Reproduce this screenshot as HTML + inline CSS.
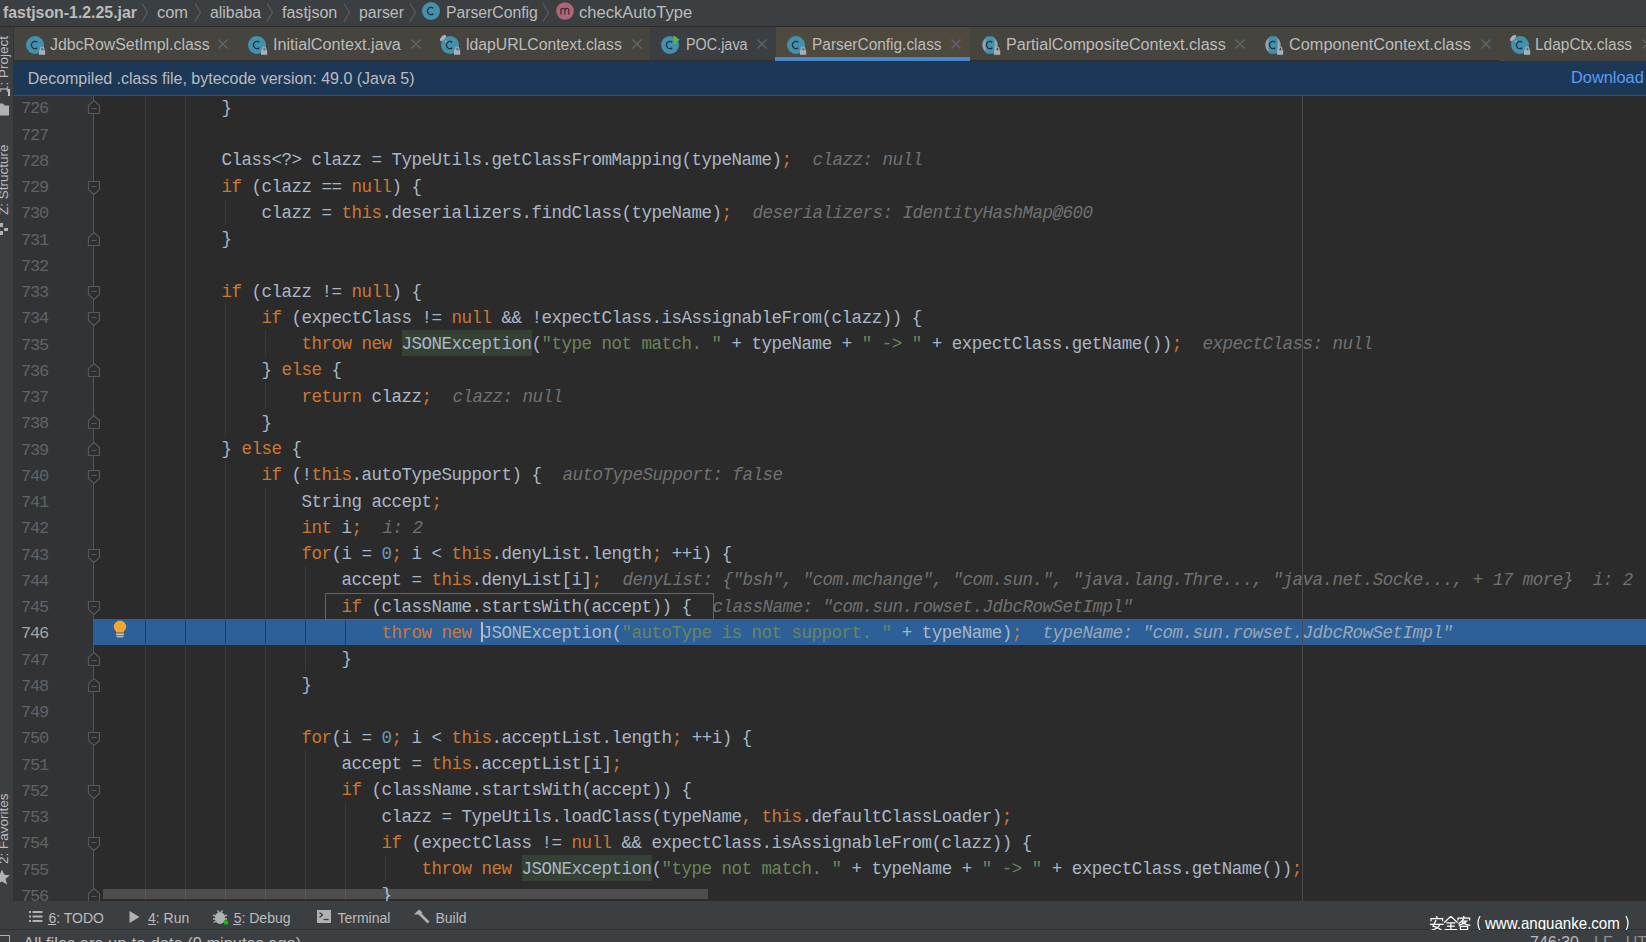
<!DOCTYPE html><html><head><meta charset="utf-8"><style>html,body{margin:0;padding:0}
body{width:1646px;height:942px;overflow:hidden;background:#3c3f41;position:relative;font-family:"Liberation Sans",sans-serif;color:#bbbbbb}
.abs{position:absolute;white-space:pre}
#crumbs{position:absolute;left:0;top:0;width:1646px;height:26px;background:#3c3f41;border-bottom:1px solid #2b2b2b}
.cr{position:absolute;top:3px;font-size:16px;line-height:20px;color:#bbbbbb;white-space:pre}
.chev{position:absolute;top:4px}
#lstrip{position:absolute;left:0;top:27px;width:13px;height:874px;background:#3c3f41;border-right:1px solid #323232}
#tabs{position:absolute;left:14px;top:27px;width:1632px;height:34px;background:#3c3f41}
.tab{position:absolute;top:0;height:34px}
.tabbg.np{background:#45443e}
.tabbg.act{background:#4e4a3f}
.tab .t{position:absolute;top:7px;font-size:16px;line-height:20px;color:#bbbbbb;white-space:pre}
.tab .x{position:absolute;top:12px}
#banner{position:absolute;left:14px;top:61px;width:1632px;height:34px;background:#1d3857;border-bottom:1px solid #4a4e52}
#editor{position:absolute;left:14px;top:96px;width:1632px;height:805px;background:#2b2b2b;overflow:hidden}
#editor>*{position:absolute}
#gutter{left:0;top:0;width:80px;height:805px;background:#313335}
.ln{left:7px;width:40px;font-family:"Liberation Mono",monospace;font-size:17px;letter-spacing:-1.2px;line-height:26.25px;height:26.25px;color:#606366;white-space:pre;text-align:left}
.ln.cur{color:#a4a3a3}
.code,.hint{font-family:"Liberation Mono",monospace;font-size:17.5px;letter-spacing:-0.5px;line-height:26.25px;height:26.25px;color:#a9b7c6;white-space:pre}
.kw{color:#cc7832}.str{color:#6a8759}.num{color:#6897bb}
.hl{background:#344134;display:inline-block;height:26px}
.hint{font-style:italic;color:#717171}
.hint.cur{color:#9aa7b5}
.execline{left:80px;width:1552px;height:26.25px;background:#2d6099}
.guide{width:1px;background:#3b3b3b}
.margin{left:1288px;top:0;width:1px;height:805px;background:#4a4a4a}
.foldline{left:79px;top:0;width:1px;height:805px;background:#555555}
.fold{left:73px}
.caret{left:467px;width:2px;height:20px;background:#bbbbbb}
.redbox{left:311px;top:497px;width:389px;height:27px;border:1px solid #e03030;box-sizing:border-box}
.hscroll{left:89px;top:793px;width:605px;height:10px;background:rgba(255,255,255,0.16)}
#toolbar{position:absolute;left:0;top:901px;width:1646px;height:28px;background:#3c3f41;border-bottom:1px solid #323232}
.tb{position:absolute;top:6px;font-size:14px;line-height:16px;color:#bbbbbb;white-space:pre}
#status{position:absolute;left:0;top:930px;width:1646px;height:12px;background:#3c3f41;overflow:hidden}
.hlbg{width:130px;height:26px;background:#344134}
</style></head><body>
<div id="crumbs"></div>
<div class="abs" style="left:3.00px;top:3.45px;font-size:16px;line-height:20px;font-weight:bold;color:#bbbbbb;transform-origin:0.00px 0;transform:scaleX(0.9911);">fastjson-1.2.25.jar</div>
<svg class="abs" style="left:141px;top:3px" width="9" height="19" viewBox="0 0 9 19"><path d="M1 0.5L6.5 9.5L1 18.5" fill="none" stroke="#5b5d5f" stroke-width="1.2"/></svg>
<div class="abs" style="left:157.30px;top:3.45px;font-size:16px;line-height:20px;color:#bbbbbb;transform-origin:0.00px 0;transform:scaleX(1.0265);">com</div>
<svg class="abs" style="left:194px;top:3px" width="9" height="19" viewBox="0 0 9 19"><path d="M1 0.5L6.5 9.5L1 18.5" fill="none" stroke="#5b5d5f" stroke-width="1.2"/></svg>
<div class="abs" style="left:210.20px;top:3.45px;font-size:16px;line-height:20px;color:#bbbbbb;transform-origin:0.00px 0;transform:scaleX(0.9903);">alibaba</div>
<svg class="abs" style="left:266px;top:3px" width="9" height="19" viewBox="0 0 9 19"><path d="M1 0.5L6.5 9.5L1 18.5" fill="none" stroke="#5b5d5f" stroke-width="1.2"/></svg>
<div class="abs" style="left:282.20px;top:3.45px;font-size:16px;line-height:20px;color:#bbbbbb;transform-origin:0.00px 0;transform:scaleX(1.0018);">fastjson</div>
<svg class="abs" style="left:343px;top:3px" width="9" height="19" viewBox="0 0 9 19"><path d="M1 0.5L6.5 9.5L1 18.5" fill="none" stroke="#5b5d5f" stroke-width="1.2"/></svg>
<div class="abs" style="left:358.70px;top:3.45px;font-size:16px;line-height:20px;color:#bbbbbb;transform-origin:0.00px 0;transform:scaleX(0.9912);">parser</div>
<svg class="abs" style="left:409px;top:3px" width="9" height="19" viewBox="0 0 9 19"><path d="M1 0.5L6.5 9.5L1 18.5" fill="none" stroke="#5b5d5f" stroke-width="1.2"/></svg>
<svg class="abs" style="left:421.00px;top:1.00px" width="22" height="22" viewBox="0 0 22 22"><circle cx="10" cy="10" r="9" fill="#4391ad"/><path d="M12.3 7.3 A3.4 3.7 0 1 0 12.3 12.7" fill="none" stroke="#22313a" stroke-width="1.3"/></svg>
<div class="abs" style="left:445.60px;top:3.45px;font-size:16px;line-height:20px;color:#bbbbbb;transform-origin:0.00px 0;transform:scaleX(0.9839);">ParserConfig</div>
<svg class="abs" style="left:542px;top:3px" width="9" height="19" viewBox="0 0 9 19"><path d="M1 0.5L6.5 9.5L1 18.5" fill="none" stroke="#5b5d5f" stroke-width="1.2"/></svg>
<svg class="abs" style="left:556.00px;top:1.60px" width="18" height="18" viewBox="0 0 18 18"><circle cx="9" cy="9" r="8.8" fill="#b06478"/><path d="M5 12.5V6.5M5 8.2c0.4-1.3 1.3-1.9 2.1-1.9c1 0 1.8 0.6 1.8 2v4.2M8.9 8.2c0.4-1.3 1.3-1.9 2.1-1.9c1 0 1.8 0.6 1.8 2v4.2" fill="none" stroke="#3a2a2f" stroke-width="1.2"/></svg>
<div class="abs" style="left:578.50px;top:3.45px;font-size:16px;line-height:20px;color:#bbbbbb;transform-origin:0.00px 0;transform:scaleX(1.0338);">checkAutoType</div>
<div id="lstrip"></div>
<div id="tabs"></div>
<div class="abs tabbg np" style="left:14px;top:27px;width:636px;height:34px"></div>
<div class="abs" style="left:650px;top:27px;width:1px;height:34px;background:#38383a"></div>
<div class="abs tabbg act" style="left:776px;top:27px;width:194px;height:34px"></div>
<div class="abs tabbg np" style="left:970px;top:27px;width:530px;height:34px"></div>
<div class="abs" style="left:14px;top:60px;width:1632px;height:1px;background:#2e2e2e"></div>
<div class="abs" style="left:775px;top:57px;width:195px;height:4px;background:#4a88c7"></div>
<div class="abs" style="left:1500px;top:27px;width:1px;height:34px;background:#4a4436"></div>
<div class="abs tabbg np" style="left:1501px;top:27px;width:145px;height:34px"></div>
<svg class="abs" style="left:24.85px;top:34.85px" width="22" height="22" viewBox="0 0 22 22"><circle cx="10" cy="10" r="9" fill="#4391ad"/><path d="M12.3 7.3 A3.4 3.7 0 1 0 12.3 12.7" fill="none" stroke="#22313a" stroke-width="1.3"/><rect x="14" y="15.2" width="6.2" height="4.6" fill="#a7b0b8"/><path d="M15.3 15.4v-1.6a1.8 1.8 0 0 1 3.6 0v1.6" stroke="#a7b0b8" stroke-width="1.2" fill="none"/></svg>
<div class="abs" style="left:50.00px;top:35.45px;font-size:16px;line-height:20px;color:#bbbbbb;transform-origin:0.00px 0;transform:scaleX(0.9919);">JdbcRowSetImpl.class</div>
<svg class="abs" style="left:218px;top:39px" width="10" height="10" viewBox="0 0 10 10"><path d="M0.5 0.5L9.5 9.5M9.5 0.5L0.5 9.5" stroke="#626a6e" stroke-width="1.2"/></svg>
<svg class="abs" style="left:247.00px;top:34.85px" width="22" height="22" viewBox="0 0 22 22"><circle cx="10" cy="10" r="9" fill="#4391ad"/><path d="M12.3 7.3 A3.4 3.7 0 1 0 12.3 12.7" fill="none" stroke="#22313a" stroke-width="1.3"/><rect x="14" y="15.2" width="6.2" height="4.6" fill="#a7b0b8"/><path d="M15.3 15.4v-1.6a1.8 1.8 0 0 1 3.6 0v1.6" stroke="#a7b0b8" stroke-width="1.2" fill="none"/></svg>
<div class="abs" style="left:272.60px;top:35.45px;font-size:16px;line-height:20px;color:#bbbbbb;transform-origin:0.00px 0;transform:scaleX(1.0119);">InitialContext.java</div>
<svg class="abs" style="left:411px;top:39px" width="10" height="10" viewBox="0 0 10 10"><path d="M0.5 0.5L9.5 9.5M9.5 0.5L0.5 9.5" stroke="#626a6e" stroke-width="1.2"/></svg>
<svg class="abs" style="left:440.00px;top:34.85px" width="22" height="22" viewBox="0 0 22 22"><circle cx="10" cy="10" r="9" fill="#4391ad"/><path d="M12.3 7.3 A3.4 3.7 0 1 0 12.3 12.7" fill="none" stroke="#22313a" stroke-width="1.3"/><ellipse cx="3" cy="3" rx="3.9" ry="1.9" transform="rotate(-45 3 3)" fill="#a9b1b8"/><path d="M5.3 5.6L6.8 7.1" stroke="#a9b1b8" stroke-width="1.3"/><rect x="14" y="15.2" width="6.2" height="4.6" fill="#a7b0b8"/><path d="M15.3 15.4v-1.6a1.8 1.8 0 0 1 3.6 0v1.6" stroke="#a7b0b8" stroke-width="1.2" fill="none"/></svg>
<div class="abs" style="left:465.70px;top:35.45px;font-size:16px;line-height:20px;color:#bbbbbb;transform-origin:0.00px 0;transform:scaleX(0.9842);">ldapURLContext.class</div>
<svg class="abs" style="left:632px;top:39px" width="10" height="10" viewBox="0 0 10 10"><path d="M0.5 0.5L9.5 9.5M9.5 0.5L0.5 9.5" stroke="#626a6e" stroke-width="1.2"/></svg>
<svg class="abs" style="left:660.00px;top:34.85px" width="22" height="22" viewBox="0 0 22 22"><circle cx="10" cy="10" r="9" fill="#4391ad"/><path d="M12.3 7.3 A3.4 3.7 0 1 0 12.3 12.7" fill="none" stroke="#22313a" stroke-width="1.3"/><path d="M13.6 0.2 L19.6 4.8 L13.6 9.2 Z" fill="#62b543"/></svg>
<div class="abs" style="left:686.00px;top:35.45px;font-size:16px;line-height:20px;color:#bbbbbb;transform-origin:0.00px 0;transform:scaleX(0.8993);">POC.java</div>
<svg class="abs" style="left:757px;top:39px" width="10" height="10" viewBox="0 0 10 10"><path d="M0.5 0.5L9.5 9.5M9.5 0.5L0.5 9.5" stroke="#626a6e" stroke-width="1.2"/></svg>
<svg class="abs" style="left:786.00px;top:34.85px" width="22" height="22" viewBox="0 0 22 22"><circle cx="10" cy="10" r="9" fill="#4391ad"/><path d="M12.3 7.3 A3.4 3.7 0 1 0 12.3 12.7" fill="none" stroke="#22313a" stroke-width="1.3"/><rect x="14" y="15.2" width="6.2" height="4.6" fill="#a7b0b8"/><path d="M15.3 15.4v-1.6a1.8 1.8 0 0 1 3.6 0v1.6" stroke="#a7b0b8" stroke-width="1.2" fill="none"/></svg>
<div class="abs" style="left:812.00px;top:35.45px;font-size:16px;line-height:20px;color:#bbbbbb;transform-origin:0.00px 0;transform:scaleX(0.9650);">ParserConfig.class</div>
<svg class="abs" style="left:951px;top:39px" width="10" height="10" viewBox="0 0 10 10"><path d="M0.5 0.5L9.5 9.5M9.5 0.5L0.5 9.5" stroke="#626a6e" stroke-width="1.2"/></svg>
<svg class="abs" style="left:980.00px;top:34.85px" width="22" height="22" viewBox="0 0 22 22"><path d="M6.2 2.6 A9 9 0 0 0 6.2 17.4 Z" fill="#9aa3ab"/><path d="M13.8 2.6 A9 9 0 0 1 13.8 17.4 Z" fill="#9aa3ab"/><rect x="5.5" y="1.2" width="9" height="17.6" rx="2.5" fill="#4391ad"/><path d="M12.3 7.3 A3.4 3.7 0 1 0 12.3 12.7" fill="none" stroke="#22313a" stroke-width="1.3"/><rect x="14" y="15.2" width="6.2" height="4.6" fill="#a7b0b8"/><path d="M15.3 15.4v-1.6a1.8 1.8 0 0 1 3.6 0v1.6" stroke="#a7b0b8" stroke-width="1.2" fill="none"/></svg>
<div class="abs" style="left:1006.00px;top:35.45px;font-size:16px;line-height:20px;color:#bbbbbb;transform-origin:0.00px 0;transform:scaleX(1.0087);">PartialCompositeContext.class</div>
<svg class="abs" style="left:1235px;top:39px" width="10" height="10" viewBox="0 0 10 10"><path d="M0.5 0.5L9.5 9.5M9.5 0.5L0.5 9.5" stroke="#626a6e" stroke-width="1.2"/></svg>
<svg class="abs" style="left:1263.00px;top:34.85px" width="22" height="22" viewBox="0 0 22 22"><path d="M6.2 2.6 A9 9 0 0 0 6.2 17.4 Z" fill="#9aa3ab"/><path d="M13.8 2.6 A9 9 0 0 1 13.8 17.4 Z" fill="#9aa3ab"/><rect x="5.5" y="1.2" width="9" height="17.6" rx="2.5" fill="#4391ad"/><path d="M12.3 7.3 A3.4 3.7 0 1 0 12.3 12.7" fill="none" stroke="#22313a" stroke-width="1.3"/><rect x="14" y="15.2" width="6.2" height="4.6" fill="#a7b0b8"/><path d="M15.3 15.4v-1.6a1.8 1.8 0 0 1 3.6 0v1.6" stroke="#a7b0b8" stroke-width="1.2" fill="none"/></svg>
<div class="abs" style="left:1288.50px;top:35.45px;font-size:16px;line-height:20px;color:#bbbbbb;transform-origin:0.00px 0;transform:scaleX(1.0179);">ComponentContext.class</div>
<svg class="abs" style="left:1481px;top:39px" width="10" height="10" viewBox="0 0 10 10"><path d="M0.5 0.5L9.5 9.5M9.5 0.5L0.5 9.5" stroke="#626a6e" stroke-width="1.2"/></svg>
<svg class="abs" style="left:1509.50px;top:34.85px" width="22" height="22" viewBox="0 0 22 22"><circle cx="10" cy="10" r="9" fill="#4391ad"/><path d="M12.3 7.3 A3.4 3.7 0 1 0 12.3 12.7" fill="none" stroke="#22313a" stroke-width="1.3"/><ellipse cx="3" cy="3" rx="3.9" ry="1.9" transform="rotate(-45 3 3)" fill="#a9b1b8"/><path d="M5.3 5.6L6.8 7.1" stroke="#a9b1b8" stroke-width="1.3"/><rect x="14" y="15.2" width="6.2" height="4.6" fill="#a7b0b8"/><path d="M15.3 15.4v-1.6a1.8 1.8 0 0 1 3.6 0v1.6" stroke="#a7b0b8" stroke-width="1.2" fill="none"/></svg>
<div class="abs" style="left:1535.20px;top:35.45px;font-size:16px;line-height:20px;color:#bbbbbb;transform-origin:0.00px 0;transform:scaleX(0.9662);">LdapCtx.class</div>
<svg class="abs" style="left:1642px;top:39px" width="10" height="10" viewBox="0 0 10 10"><path d="M0.5 0.5L9.5 9.5M9.5 0.5L0.5 9.5" stroke="#626a6e" stroke-width="1.2"/></svg>
<div id="banner"></div>
<div class="abs" style="left:27.70px;top:69.05px;font-size:16px;line-height:20px;color:#bbbbbb;transform-origin:0.00px 0;transform:scaleX(1.0000);">Decompiled .class file, bytecode version: 49.0 (Java 5)</div>
<div class="abs" style="left:1570.50px;top:68.15px;font-size:16px;line-height:20px;color:#589df6;transform-origin:0.00px 0;transform:scaleX(1.0225);">Download</div>
<div id="editor">
<div id="gutter"></div>
<div class="execline" style="top:522.75px"></div>
<div class="hlbg" style="left:388px;top:234.00px"></div>
<div class="hlbg" style="left:508px;top:759.00px"></div>
<div class="guide" style="left:131px;top:-2.25px;height:813.75px"></div>
<div class="guide" style="left:171px;top:-2.25px;height:813.75px"></div>
<div class="guide" style="left:211px;top:102.75px;height:26.25px"></div>
<div class="guide" style="left:211px;top:207.75px;height:131.25px"></div>
<div class="guide" style="left:211px;top:365.25px;height:446.25px"></div>
<div class="guide" style="left:251px;top:234.00px;height:26.25px"></div>
<div class="guide" style="left:251px;top:286.50px;height:26.25px"></div>
<div class="guide" style="left:251px;top:391.50px;height:420.00px"></div>
<div class="guide" style="left:291px;top:470.25px;height:105.00px"></div>
<div class="guide" style="left:291px;top:654.00px;height:157.50px"></div>
<div class="guide" style="left:331px;top:522.75px;height:26.25px"></div>
<div class="guide" style="left:331px;top:706.50px;height:105.00px"></div>
<div class="guide" style="left:371px;top:759.00px;height:26.25px"></div>
<div class="margin"></div>
<div class="foldline"></div>
<svg class="fold" style="top:84.00px" width="14" height="16" viewBox="0 0 14 16"><path d="M1.5 1.5h11v8l-5.5 5-5.5-5z" fill="#2d2e2f" stroke="#575859" stroke-width="1.2"/><path d="M4.5 6.5h5" stroke="#575859" stroke-width="1.1"/></svg>
<svg class="fold" style="top:189.00px" width="14" height="16" viewBox="0 0 14 16"><path d="M1.5 1.5h11v8l-5.5 5-5.5-5z" fill="#2d2e2f" stroke="#575859" stroke-width="1.2"/><path d="M4.5 6.5h5" stroke="#575859" stroke-width="1.1"/></svg>
<svg class="fold" style="top:215.25px" width="14" height="16" viewBox="0 0 14 16"><path d="M1.5 1.5h11v8l-5.5 5-5.5-5z" fill="#2d2e2f" stroke="#575859" stroke-width="1.2"/><path d="M4.5 6.5h5" stroke="#575859" stroke-width="1.1"/></svg>
<svg class="fold" style="top:372.75px" width="14" height="16" viewBox="0 0 14 16"><path d="M1.5 1.5h11v8l-5.5 5-5.5-5z" fill="#2d2e2f" stroke="#575859" stroke-width="1.2"/><path d="M4.5 6.5h5" stroke="#575859" stroke-width="1.1"/></svg>
<svg class="fold" style="top:451.50px" width="14" height="16" viewBox="0 0 14 16"><path d="M1.5 1.5h11v8l-5.5 5-5.5-5z" fill="#2d2e2f" stroke="#575859" stroke-width="1.2"/><path d="M4.5 6.5h5" stroke="#575859" stroke-width="1.1"/></svg>
<svg class="fold" style="top:504.00px" width="14" height="16" viewBox="0 0 14 16"><path d="M1.5 1.5h11v8l-5.5 5-5.5-5z" fill="#2d2e2f" stroke="#575859" stroke-width="1.2"/><path d="M4.5 6.5h5" stroke="#575859" stroke-width="1.1"/></svg>
<svg class="fold" style="top:635.25px" width="14" height="16" viewBox="0 0 14 16"><path d="M1.5 1.5h11v8l-5.5 5-5.5-5z" fill="#2d2e2f" stroke="#575859" stroke-width="1.2"/><path d="M4.5 6.5h5" stroke="#575859" stroke-width="1.1"/></svg>
<svg class="fold" style="top:687.75px" width="14" height="16" viewBox="0 0 14 16"><path d="M1.5 1.5h11v8l-5.5 5-5.5-5z" fill="#2d2e2f" stroke="#575859" stroke-width="1.2"/><path d="M4.5 6.5h5" stroke="#575859" stroke-width="1.1"/></svg>
<svg class="fold" style="top:740.25px" width="14" height="16" viewBox="0 0 14 16"><path d="M1.5 1.5h11v8l-5.5 5-5.5-5z" fill="#2d2e2f" stroke="#575859" stroke-width="1.2"/><path d="M4.5 6.5h5" stroke="#575859" stroke-width="1.1"/></svg>
<svg class="fold" style="top:3.25px" width="14" height="16" viewBox="0 0 14 16"><path d="M1.5 14.5h11v-8l-5.5-5-5.5 5z" fill="#2d2e2f" stroke="#575859" stroke-width="1.2"/><path d="M4.5 9.5h5" stroke="#575859" stroke-width="1.1"/></svg>
<svg class="fold" style="top:134.50px" width="14" height="16" viewBox="0 0 14 16"><path d="M1.5 14.5h11v-8l-5.5-5-5.5 5z" fill="#2d2e2f" stroke="#575859" stroke-width="1.2"/><path d="M4.5 9.5h5" stroke="#575859" stroke-width="1.1"/></svg>
<svg class="fold" style="top:265.75px" width="14" height="16" viewBox="0 0 14 16"><path d="M1.5 14.5h11v-8l-5.5-5-5.5 5z" fill="#2d2e2f" stroke="#575859" stroke-width="1.2"/><path d="M4.5 9.5h5" stroke="#575859" stroke-width="1.1"/></svg>
<svg class="fold" style="top:318.25px" width="14" height="16" viewBox="0 0 14 16"><path d="M1.5 14.5h11v-8l-5.5-5-5.5 5z" fill="#2d2e2f" stroke="#575859" stroke-width="1.2"/><path d="M4.5 9.5h5" stroke="#575859" stroke-width="1.1"/></svg>
<svg class="fold" style="top:344.50px" width="14" height="16" viewBox="0 0 14 16"><path d="M1.5 14.5h11v-8l-5.5-5-5.5 5z" fill="#2d2e2f" stroke="#575859" stroke-width="1.2"/><path d="M4.5 9.5h5" stroke="#575859" stroke-width="1.1"/></svg>
<svg class="fold" style="top:554.50px" width="14" height="16" viewBox="0 0 14 16"><path d="M1.5 14.5h11v-8l-5.5-5-5.5 5z" fill="#2d2e2f" stroke="#575859" stroke-width="1.2"/><path d="M4.5 9.5h5" stroke="#575859" stroke-width="1.1"/></svg>
<svg class="fold" style="top:580.75px" width="14" height="16" viewBox="0 0 14 16"><path d="M1.5 14.5h11v-8l-5.5-5-5.5 5z" fill="#2d2e2f" stroke="#575859" stroke-width="1.2"/><path d="M4.5 9.5h5" stroke="#575859" stroke-width="1.1"/></svg>
<svg class="fold" style="top:790.75px" width="14" height="16" viewBox="0 0 14 16"><path d="M1.5 14.5h11v-8l-5.5-5-5.5 5z" fill="#2d2e2f" stroke="#575859" stroke-width="1.2"/><path d="M4.5 9.5h5" stroke="#575859" stroke-width="1.1"/></svg>
<div class="ln" style="top:0.25px">726</div>
<div class="code" style="top:-1.25px;left:207.5px">}</div>
<div class="ln" style="top:26.50px">727</div>
<div class="ln" style="top:52.75px">728</div>
<div class="code" style="top:51.25px;left:207.5px">Class&lt;?&gt; clazz = TypeUtils.getClassFromMapping(typeName)<span class="kw">;</span></div>
<div class="hint" style="top:51.25px;left:798.5px">clazz: null</div>
<div class="ln" style="top:79.00px">729</div>
<div class="code" style="top:77.50px;left:207.5px"><span class="kw">if</span> (clazz == <span class="kw">null</span>) {</div>
<div class="ln" style="top:105.25px">730</div>
<div class="code" style="top:103.75px;left:247.5px">clazz = <span class="kw">this</span>.deserializers.findClass(typeName)<span class="kw">;</span></div>
<div class="hint" style="top:103.75px;left:738.5px">deserializers: IdentityHashMap@600</div>
<div class="ln" style="top:131.50px">731</div>
<div class="code" style="top:130.00px;left:207.5px">}</div>
<div class="ln" style="top:157.75px">732</div>
<div class="ln" style="top:184.00px">733</div>
<div class="code" style="top:182.50px;left:207.5px"><span class="kw">if</span> (clazz != <span class="kw">null</span>) {</div>
<div class="ln" style="top:210.25px">734</div>
<div class="code" style="top:208.75px;left:247.5px"><span class="kw">if</span> (expectClass != <span class="kw">null</span> &amp;&amp; !expectClass.isAssignableFrom(clazz)) {</div>
<div class="ln" style="top:236.50px">735</div>
<div class="code" style="top:235.00px;left:287.5px"><span class="kw">throw</span> <span class="kw">new</span> JSONException(<span class="str">&quot;type not match. &quot;</span> + typeName + <span class="str">&quot; -&gt; &quot;</span> + expectClass.getName())<span class="kw">;</span></div>
<div class="hint" style="top:235.00px;left:1188.5px">expectClass: null</div>
<div class="ln" style="top:262.75px">736</div>
<div class="code" style="top:261.25px;left:247.5px">} <span class="kw">else</span> {</div>
<div class="ln" style="top:289.00px">737</div>
<div class="code" style="top:287.50px;left:287.5px"><span class="kw">return</span> clazz<span class="kw">;</span></div>
<div class="hint" style="top:287.50px;left:438.5px">clazz: null</div>
<div class="ln" style="top:315.25px">738</div>
<div class="code" style="top:313.75px;left:247.5px">}</div>
<div class="ln" style="top:341.50px">739</div>
<div class="code" style="top:340.00px;left:207.5px">} <span class="kw">else</span> {</div>
<div class="ln" style="top:367.75px">740</div>
<div class="code" style="top:366.25px;left:247.5px"><span class="kw">if</span> (!<span class="kw">this</span>.autoTypeSupport) {</div>
<div class="hint" style="top:366.25px;left:548.5px">autoTypeSupport: false</div>
<div class="ln" style="top:394.00px">741</div>
<div class="code" style="top:392.50px;left:287.5px">String accept<span class="kw">;</span></div>
<div class="ln" style="top:420.25px">742</div>
<div class="code" style="top:418.75px;left:287.5px"><span class="kw">int</span> i<span class="kw">;</span></div>
<div class="hint" style="top:418.75px;left:368.5px">i: 2</div>
<div class="ln" style="top:446.50px">743</div>
<div class="code" style="top:445.00px;left:287.5px"><span class="kw">for</span>(i = <span class="num">0</span><span class="kw">;</span> i &lt; <span class="kw">this</span>.denyList.length<span class="kw">;</span> ++i) {</div>
<div class="ln" style="top:472.75px">744</div>
<div class="code" style="top:471.25px;left:327.5px">accept = <span class="kw">this</span>.denyList[i]<span class="kw">;</span></div>
<div class="hint" style="top:471.25px;left:608.5px">denyList: {&quot;bsh&quot;, &quot;com.mchange&quot;, &quot;com.sun.&quot;, &quot;java.lang.Thre..., &quot;java.net.Socke..., + 17 more}  i: 2</div>
<div class="ln" style="top:499.00px">745</div>
<div class="code" style="top:497.50px;left:327.5px"><span class="kw">if</span> (className.startsWith(accept)) {</div>
<div class="hint" style="top:497.50px;left:698.5px">className: &quot;com.sun.rowset.JdbcRowSetImpl&quot;</div>
<div class="ln cur" style="top:525.25px">746</div>
<div class="code" style="top:523.75px;left:367.5px"><span class="kw">throw</span> <span class="kw">new</span> JSONException(<span class="str">&quot;autoType is not support. &quot;</span> + typeName)<span class="kw">;</span></div>
<div class="hint cur" style="top:523.75px;left:1028.5px">typeName: &quot;com.sun.rowset.JdbcRowSetImpl&quot;</div>
<div class="ln" style="top:551.50px">747</div>
<div class="code" style="top:550.00px;left:327.5px">}</div>
<div class="ln" style="top:577.75px">748</div>
<div class="code" style="top:576.25px;left:287.5px">}</div>
<div class="ln" style="top:604.00px">749</div>
<div class="ln" style="top:630.25px">750</div>
<div class="code" style="top:628.75px;left:287.5px"><span class="kw">for</span>(i = <span class="num">0</span><span class="kw">;</span> i &lt; <span class="kw">this</span>.acceptList.length<span class="kw">;</span> ++i) {</div>
<div class="ln" style="top:656.50px">751</div>
<div class="code" style="top:655.00px;left:327.5px">accept = <span class="kw">this</span>.acceptList[i]<span class="kw">;</span></div>
<div class="ln" style="top:682.75px">752</div>
<div class="code" style="top:681.25px;left:327.5px"><span class="kw">if</span> (className.startsWith(accept)) {</div>
<div class="ln" style="top:709.00px">753</div>
<div class="code" style="top:707.50px;left:367.5px">clazz = TypeUtils.loadClass(typeName<span class="kw">,</span> <span class="kw">this</span>.defaultClassLoader)<span class="kw">;</span></div>
<div class="ln" style="top:735.25px">754</div>
<div class="code" style="top:733.75px;left:367.5px"><span class="kw">if</span> (expectClass != <span class="kw">null</span> &amp;&amp; expectClass.isAssignableFrom(clazz)) {</div>
<div class="ln" style="top:761.50px">755</div>
<div class="code" style="top:760.00px;left:407.5px"><span class="kw">throw</span> <span class="kw">new</span> JSONException(<span class="str">&quot;type not match. &quot;</span> + typeName + <span class="str">&quot; -&gt; &quot;</span> + expectClass.getName())<span class="kw">;</span></div>
<div class="ln" style="top:787.75px">756</div>
<div class="code" style="top:786.25px;left:367.5px">}</div>
<div class="caret" style="top:525.75px"></div>
<div class="redbox"></div>
<svg style="left:99px;top:523.5px" width="14" height="20" viewBox="0 0 14 20"><path d="M7 0.6a6.2 6.2 0 0 1 6.2 6.2c0 2.2-1.3 3.5-2.3 4.6v1.2h-7.8v-1.2c-1-1.1-2.3-2.4-2.3-4.6a6.2 6.2 0 0 1 6.2-6.2z" fill="#f0a732"/><path d="M3 14.3h8M3.5 16.5h7" stroke="#c8c8c8" stroke-width="1.4"/></svg>
<div class="hscroll"></div>
</div>
<div class="abs" style="left:-5.18px;top:92.80px;font-size:13.5px;line-height:17px;color:#bbbbbb;transform-origin:0 0;transform:rotate(-90deg)">1: Project</div>
<div class="abs" style="left:8px;top:89px;width:2px;height:7px;background:#bbbbbb"></div>
<svg class="abs" style="left:0;top:102px" width="10" height="14" viewBox="0 0 10 14"><path d="M-2 1.5h5l1.5 2h4.5v10h-11z" fill="#afb1b3"/></svg>
<div class="abs" style="left:-5.18px;top:215.00px;font-size:13.5px;line-height:17px;color:#bbbbbb;transform-origin:0 0;transform:rotate(-90deg)">Z: Structure</div>
<svg class="abs" style="left:0;top:222px" width="10" height="14" viewBox="0 0 10 14"><rect x="-2" y="1" width="5" height="4" fill="#afb1b3"/><rect x="4" y="6" width="4" height="3" fill="#afb1b3"/><rect x="-2" y="9" width="5" height="4" fill="#afb1b3"/></svg>
<div class="abs" style="left:-5.18px;top:864.30px;font-size:13.5px;line-height:17px;color:#bbbbbb;transform-origin:0 0;transform:rotate(-90deg)">2: Favorites</div>
<svg class="abs" style="left:-6px;top:869px" width="16" height="17" viewBox="0 0 16 17"><path d="M8 0.5l2.3 5.3 5.6 0.4-4.3 3.6 1.4 5.6-5-3-5 3 1.4-5.6-4.3-3.6 5.6-0.4z" fill="#afb1b3"/></svg>
<div id="toolbar"></div>
<svg class="abs" style="left:29px;top:911px" width="14" height="11" viewBox="0 0 14 11"><rect x="0" y="0" width="2" height="2" fill="#afb1b3"/><rect x="3.5" y="0" width="10" height="2" fill="#afb1b3"/><rect x="0" y="4.5" width="2" height="2" fill="#afb1b3"/><rect x="3.5" y="4.5" width="10" height="2" fill="#afb1b3"/><rect x="0" y="9" width="2" height="2" fill="#afb1b3"/><rect x="3.5" y="9" width="10" height="2" fill="#afb1b3"/></svg>
<div class="abs" style="left:48.40px;top:909.15px;font-size:14px;line-height:18px;color:#bbbbbb;">6: TODO</div>
<div class="abs" style="left:48px;top:924px;width:8px;height:1px;background:#bbbbbb"></div>
<svg class="abs" style="left:129px;top:911px" width="11" height="12" viewBox="0 0 11 12"><path d="M0.5 0L10.5 6L0.5 12z" fill="#afb1b3"/></svg>
<div class="abs" style="left:148.00px;top:909.15px;font-size:14px;line-height:18px;color:#bbbbbb;">4: Run</div>
<div class="abs" style="left:148px;top:924px;width:8px;height:1px;background:#bbbbbb"></div>
<svg class="abs" style="left:212px;top:909px" width="17" height="16" viewBox="0 0 17 16"><path d="M5.5 1.5l1.5 2M10.5 1.5l-1.5 2" stroke="#afb1b3" stroke-width="1.3"/><ellipse cx="8" cy="9" rx="5" ry="6" fill="#afb1b3"/><path d="M1 6.5h3M1 10h3M1.5 13.5l2.5-1.5M12 6.5h3M12 10h3M14.5 13.5l-2.5-1.5" stroke="#afb1b3" stroke-width="1.3"/><circle cx="14" cy="13.5" r="2.3" fill="#00c900"/></svg>
<div class="abs" style="left:233.70px;top:909.15px;font-size:14px;line-height:18px;color:#bbbbbb;">5: Debug</div>
<div class="abs" style="left:233px;top:924px;width:8px;height:1px;background:#bbbbbb"></div>
<svg class="abs" style="left:317px;top:910px" width="14" height="13" viewBox="0 0 14 13"><rect x="0" y="0" width="14" height="13" fill="#afb1b3"/><path d="M2.5 2.5l3 2.5-3 2.5" stroke="#3c3f41" stroke-width="1.3" fill="none"/><path d="M6.5 9.5h5" stroke="#3c3f41" stroke-width="1.3"/></svg>
<div class="abs" style="left:337.50px;top:909.15px;font-size:14px;line-height:18px;color:#bbbbbb;">Terminal</div>
<svg class="abs" style="left:413px;top:909px" width="17" height="15" viewBox="0 0 17 15"><path d="M1 5.5L6 0.5L9.5 3.5L7.5 5.5z" fill="#afb1b3"/><path d="M6.5 4.5L15.5 13.5" stroke="#afb1b3" stroke-width="2.6"/></svg>
<div class="abs" style="left:435.50px;top:909.15px;font-size:14px;line-height:18px;color:#bbbbbb;">Build</div>
<svg class="abs" style="left:1430px;top:916px" width="14" height="15" viewBox="0 0 14 15"><path d="M6.6 0.4L7.3 2M1 4.6V2.6H12.6V4.6M0.6 8.3H13.2M5.8 4.6Q4.6 7.6 3 10.2Q7.5 11.2 11.8 14.2M9.8 8.3Q8.6 12.6 1.2 14.3" fill="none" stroke="#ffffff" stroke-width="1.25" stroke-linecap="square"/></svg>
<svg class="abs" style="left:1443.5px;top:916px" width="14" height="15" viewBox="0 0 14 15"><path d="M6.8 0.3L0.6 6.2M6.8 0.3L13.2 6.2M3 6.8H10.8M3.5 10H10.3M1.2 13.6H12.6M6.9 6.8V13.6" fill="none" stroke="#ffffff" stroke-width="1.25" stroke-linecap="square"/></svg>
<svg class="abs" style="left:1457px;top:916px" width="14" height="15" viewBox="0 0 14 15"><path d="M6.6 0.3L7.2 1.6M1 3.9V2.1H12.6V3.9M6.2 3.4Q4.6 6 2 7.4M5 5H9.6Q7.2 8 2.2 9.2M5.6 6.4Q8.6 8.6 12.8 9.2M3.4 10.4V14.3M3.4 10.4H10.6V14.3M3.4 13.7H10.6" fill="none" stroke="#ffffff" stroke-width="1.25" stroke-linecap="square"/></svg>
<svg class="abs" style="left:1475px;top:916px" width="6" height="15" viewBox="0 0 6 15"><path d="M4.8 0.5Q1.2 7 4.8 14" fill="none" stroke="#ffffff" stroke-width="1.25" stroke-linecap="square"/></svg>
<div class="abs" style="left:1485.10px;top:913.28px;font-size:16.5px;line-height:21px;color:#ffffff;transform-origin:-0.10px 0;transform:scaleX(0.9127);">www.anquanke.com</div>
<svg class="abs" style="left:1625px;top:916px" width="6" height="15" viewBox="0 0 6 15"><path d="M1.2 0.5Q4.8 7 1.2 14" fill="none" stroke="#ffffff" stroke-width="1.25" stroke-linecap="square"/></svg>
<div id="status"></div>
<svg class="abs" style="left:-4px;top:935px" width="14" height="14" viewBox="0 0 14 14"><rect x="0.5" y="0.5" width="13" height="13" fill="none" stroke="#afb1b3" stroke-width="1"/></svg>
<div class="abs" style="left:23.30px;top:933.31px;font-size:16.4px;line-height:20px;color:#bbbbbb;">All files are up-to-date (9 minutes ago)</div>
<div class="abs" style="left:1530.00px;top:933.45px;font-size:16px;line-height:20px;color:#bbbbbb;">746:30</div>
<div class="abs" style="left:1594.00px;top:933.45px;font-size:16px;line-height:20px;color:#8f8f8f;">LF</div>
<div class="abs" style="left:1625.70px;top:933.45px;font-size:16px;line-height:20px;color:#8f8f8f;">UTF-8</div>
</body></html>
